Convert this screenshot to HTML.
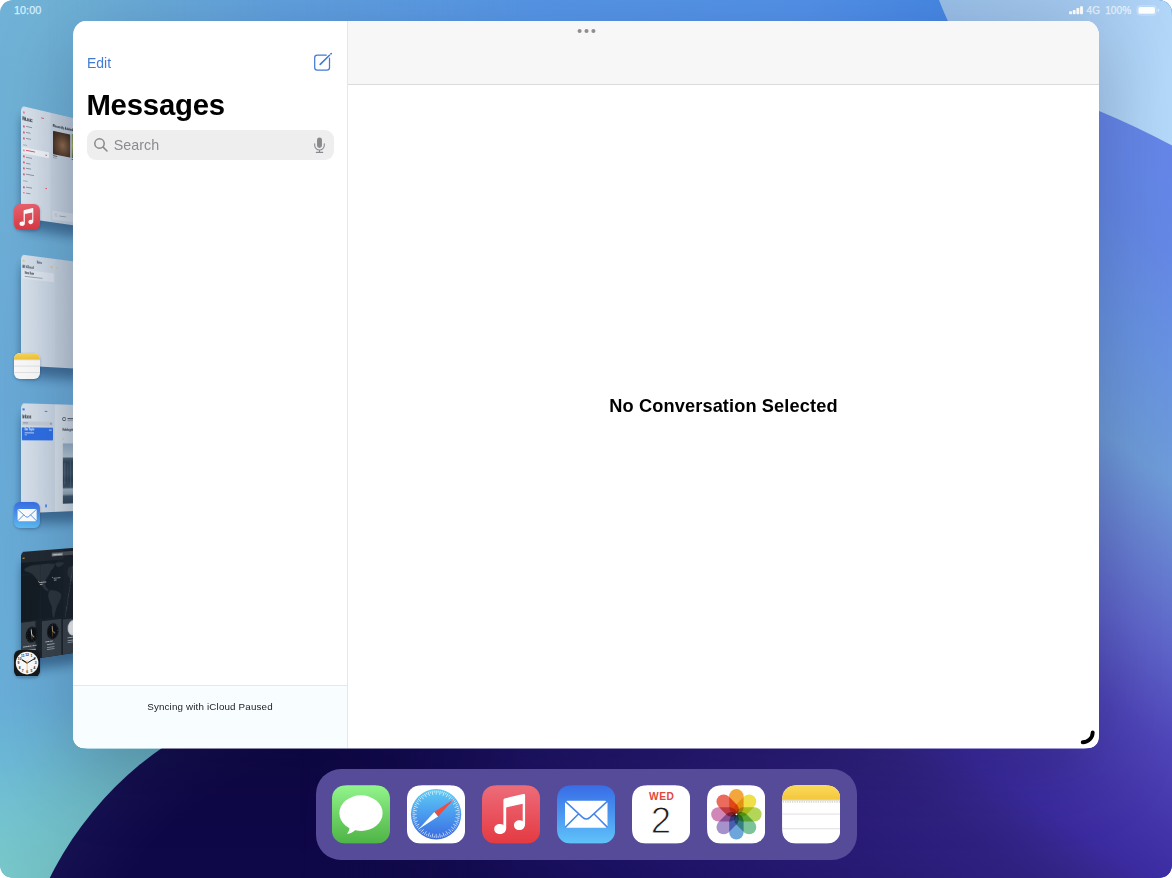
<!DOCTYPE html>
<html lang="en">
<head>
<meta charset="utf-8">
<title>Messages</title>
<style>
*{box-sizing:border-box;margin:0;padding:0}
html,body{width:1172px;height:878px;overflow:hidden;background:#fff;font-family:"Liberation Sans",sans-serif;}
#screen{position:absolute;left:0;top:0;width:1172px;height:878px;overflow:hidden;background:#6aaad2;clip-path:path("M0.00 20.18C0.00 14.37 0.00 11.46 0.99 8.34C2.23 4.92 4.92 2.23 8.34 0.99C11.46 0.00 14.37 0.00 20.18 0.00L1151.82 0.00C1157.63 0.00 1160.54 0.00 1163.66 0.99C1167.08 2.23 1169.77 4.92 1171.01 8.34C1172.00 11.46 1172.00 14.37 1172.00 20.18L1172.00 857.82C1172.00 863.63 1172.00 866.54 1171.01 869.66C1169.77 873.08 1167.08 875.77 1163.66 877.01C1160.54 878.00 1157.63 878.00 1151.82 878.00L20.18 878.00C14.37 878.00 11.46 878.00 8.34 877.01C4.92 875.77 2.23 873.08 0.99 869.66C0.00 866.54 0.00 863.63 0.00 857.82Z");}
#wall{position:absolute;left:0;top:0;width:1172px;height:878px;}
.abs{position:absolute}
/* status bar */
#time{position:absolute;left:14px;top:4.1px;font-size:10.9px;line-height:12px;color:#d6f0ff;letter-spacing:0;-webkit-text-stroke:0.25px #d6f0ff;}
#stat{position:absolute;left:1060px;top:0;width:112px;height:20px;}
/* window */
#win{position:absolute;left:73px;top:20.5px;width:1026px;height:728px;overflow:hidden;background:#fff;clip-path:path("M0.00 22.93C0.00 16.33 0.00 13.03 1.12 9.47C2.54 5.59 5.59 2.54 9.47 1.12C13.03 0.00 16.33 0.00 22.93 0.00L1003.07 0.00C1009.67 0.00 1012.97 0.00 1016.53 1.12C1020.41 2.54 1023.46 5.59 1024.88 9.47C1026.00 13.03 1026.00 16.33 1026.00 22.93L1026.00 709.66C1026.00 714.94 1026.00 717.58 1025.10 720.42C1023.97 723.53 1021.53 725.97 1018.42 727.10C1015.58 728.00 1012.94 728.00 1007.66 728.00L18.34 728.00C13.06 728.00 10.42 728.00 7.58 727.10C4.47 725.97 2.03 723.53 0.90 720.42C0.00 717.58 0.00 714.94 0.00 709.66Z");}
#win>*{margin-top:-0.5px}
#winsh{position:absolute;left:73px;top:20.5px;width:1026px;height:728px;border-radius:14px;box-shadow:0 20px 80px rgba(0,0,24,0.22);}
#side{position:absolute;left:0;top:0;width:274px;height:100%;background:#fff;}
#divider{position:absolute;left:274px;top:0;width:1px;height:100%;background:#e7e7e7;}
#main{position:absolute;left:275px;top:0;right:0;height:100%;background:#fff;}
#mainhead{position:absolute;left:0;top:0;right:0;height:65px;background:#f7f7f7;border-bottom:1px solid #dbdbdb;}
#edit{position:absolute;left:14px;top:33.8px;font-size:14px;line-height:18px;color:#437ad2;}
#title{position:absolute;left:13.4px;top:66.6px;font-size:29.3px;line-height:36px;font-weight:bold;color:#000;letter-spacing:-0.2px;}
#search{position:absolute;left:14px;top:109.6px;width:246.8px;height:30.3px;border-radius:9px;background:#eeeeef;}
#search span{position:absolute;left:26.8px;top:6.4px;font-size:14.3px;line-height:18px;color:#8a8a8f;}
#foot{position:absolute;left:0;top:665px;width:274px;bottom:0;background:#f8fdff;border-top:1px solid #e3e8ea;}
#foot span{position:absolute;left:0;width:274px;top:14.6px;text-align:center;font-size:9.8px;letter-spacing:0.16px;line-height:12px;color:#1c1c1e;}
#nocon{position:absolute;left:0;right:0;top:375.2px;text-align:center;font-size:18.2px;letter-spacing:0.12px;line-height:22px;font-weight:bold;color:#000;}
/* dock */
#dock{position:absolute;left:315.7px;top:769px;width:541px;height:91px;border-radius:25px;background:#564b99;}
.ic{position:absolute;top:16.2px;width:58.4px;height:58.5px;overflow:hidden;clip-path:path("M0.00 20.48C0.00 14.59 0.00 11.64 1.00 8.46C2.27 5.00 5.00 2.27 8.46 1.00C11.64 0.00 14.59 0.00 20.48 0.00L37.92 0.00C43.81 0.00 46.76 0.00 49.94 1.00C53.40 2.27 56.13 5.00 57.40 8.46C58.40 11.64 58.40 14.59 58.40 20.48L58.40 38.02C58.40 43.91 58.40 46.86 57.40 50.04C56.13 53.50 53.40 56.23 49.94 57.50C46.76 58.50 43.81 58.50 37.92 58.50L20.48 58.50C14.59 58.50 11.64 58.50 8.46 57.50C5.00 56.23 2.27 53.50 1.00 50.04C0.00 46.86 0.00 43.91 0.00 38.02Z");}
.ic svg{display:block}

/* stage manager thumbs */
.th{position:absolute;left:0;top:0;width:82px;border-radius:5px 0 0 5px;transform-origin:0 0;overflow:hidden;font-family:"Liberation Sans",sans-serif;}
.th i{position:absolute;display:block;}
.th b{position:absolute;display:block;font-weight:bold;white-space:nowrap;line-height:1;}
.ths{position:absolute;left:0;top:11px;width:82px;transform-origin:0 0;background:rgba(20,50,90,0.5);filter:blur(6px);border-radius:6px;}
.sic{position:absolute;left:13.9px;width:26.2px;height:26.2px;border-radius:6px;overflow:hidden;box-shadow:0 1px 3px rgba(10,30,70,0.28);}
.sic svg{display:block}
#winshadow{position:absolute;left:58px;top:20px;width:15px;height:728px;background:linear-gradient(90deg,rgba(20,50,100,0),rgba(20,50,100,0.10));}
</style>
</head>
<body>
<div id="screen">
<svg id="wall" viewBox="0 0 1172 878">
<defs>
<linearGradient id="gLeft" gradientUnits="userSpaceOnUse" x1="0" y1="0" x2="0" y2="878">
<stop offset="0" stop-color="#70b2d6"/><stop offset="0.12" stop-color="#6fb1d6"/><stop offset="0.45" stop-color="#69a9d7"/><stop offset="0.8" stop-color="#68aed8"/><stop offset="0.87" stop-color="#6cb8d5"/><stop offset="0.95" stop-color="#76c8d1"/><stop offset="1" stop-color="#7dd0cf"/>
</linearGradient>
<linearGradient id="gLeftX" gradientUnits="userSpaceOnUse" x1="0" y1="0" x2="120" y2="0">
<stop offset="0" stop-color="#46789a" stop-opacity="0"/><stop offset="0.6" stop-color="#46789a" stop-opacity="0.2"/><stop offset="1" stop-color="#46789a" stop-opacity="0.2"/>
</linearGradient>
<linearGradient id="gTop" gradientUnits="userSpaceOnUse" x1="0" y1="0" x2="950" y2="0">
<stop offset="0.05" stop-color="#5f9fe0" stop-opacity="0"/><stop offset="0.3" stop-color="#5d9ce2" stop-opacity="0.8"/><stop offset="0.55" stop-color="#5797e8" stop-opacity="1"/><stop offset="0.85" stop-color="#5392ea"/><stop offset="1" stop-color="#4788e6"/>
</linearGradient>
<linearGradient id="gTopFade" gradientUnits="userSpaceOnUse" x1="0" y1="0" x2="0" y2="300">
<stop offset="0.1" stop-color="#fff" stop-opacity="1"/><stop offset="1" stop-color="#fff" stop-opacity="0"/>
</linearGradient>
<mask id="mTop"><rect x="0" y="0" width="1172" height="300" fill="url(#gTopFade)"/></mask>
<linearGradient id="gRight" gradientUnits="userSpaceOnUse" x1="1172" y1="100" x2="550.5" y2="1007.5">
<stop offset="0" stop-color="#6685ea"/><stop offset="0.113" stop-color="#6488e6"/><stop offset="0.20" stop-color="#6893e1"/><stop offset="0.285" stop-color="#6e9cd9"/><stop offset="0.35" stop-color="#6780d1"/><stop offset="0.415" stop-color="#5e64c9"/><stop offset="0.485" stop-color="#4f45b9"/><stop offset="0.55" stop-color="#4334a9"/><stop offset="0.595" stop-color="#3b2ba0"/><stop offset="0.625" stop-color="#34268b"/><stop offset="0.655" stop-color="#2f2180"/><stop offset="0.685" stop-color="#2c1e7c"/><stop offset="0.87" stop-color="#1a1060"/><stop offset="0.974" stop-color="#110a4b"/>
</linearGradient>
<linearGradient id="gRightX" gradientUnits="userSpaceOnUse" x1="1095" y1="0" x2="1172" y2="0">
<stop offset="0" stop-color="#142878" stop-opacity="0.2"/><stop offset="1" stop-color="#142878" stop-opacity="0"/>
</linearGradient>
<linearGradient id="gRightY" gradientUnits="userSpaceOnUse" x1="0" y1="500" x2="0" y2="760">
<stop offset="0" stop-color="#fff" stop-opacity="1"/><stop offset="1" stop-color="#fff" stop-opacity="0"/>
</linearGradient>
<mask id="mRight"><rect x="1000" y="0" width="172" height="878" fill="url(#gRightY)"/></mask>
<linearGradient id="gLight" gradientUnits="userSpaceOnUse" x1="940" y1="0" x2="1172" y2="60">
<stop offset="0" stop-color="#9ac0e9"/><stop offset="0.6" stop-color="#a5caf0"/><stop offset="1" stop-color="#b3d8f9"/>
</linearGradient>
<linearGradient id="gBotFade" gradientUnits="userSpaceOnUse" x1="300" y1="0" x2="520" y2="0"><stop offset="0" stop-color="#fff" stop-opacity="0"/><stop offset="1" stop-color="#fff" stop-opacity="1"/></linearGradient>
<mask id="mBot"><rect x="300" y="740" width="872" height="140" fill="url(#gBotFade)"/></mask>
<radialGradient id="gTeal" gradientUnits="userSpaceOnUse" cx="359" cy="1031" r="520">
<stop offset="0.66" stop-color="#68aeb6" stop-opacity="0.55"/><stop offset="0.84" stop-color="#6cb4bc" stop-opacity="0"/>
</radialGradient>
<clipPath id="cRight"><rect x="1000" y="0" width="172" height="878"/></clipPath>
</defs>
<rect x="0" y="0" width="1172" height="878" fill="url(#gLeft)"/>
<rect x="0" y="0" width="1172" height="300" fill="url(#gTop)" mask="url(#mTop)"/>
<circle cx="1498" cy="-218" r="600" fill="url(#gLight)"/>
<g clip-path="url(#cRight)">
<circle cx="793" cy="850" r="800" fill="url(#gRight)"/>
</g>
<circle cx="359" cy="1031" r="520" fill="url(#gTeal)"/>
<radialGradient id="gDark" gradientUnits="userSpaceOnUse" cx="359" cy="1031" r="345"><stop offset="0.8" stop-color="#0f0848"/><stop offset="1" stop-color="#151050"/></radialGradient>
<circle cx="359" cy="1031" r="345" fill="url(#gDark)"/>
<rect x="300" y="740" width="872" height="140" fill="url(#gRight)" mask="url(#mBot)"/>
</svg>

<div id="time">10:00</div>
<svg id="stat" viewBox="0 0 112 20">
<g fill="#fff">
<rect x="9.1" y="11.3" width="2.9" height="3" rx="0.7"/>
<rect x="12.75" y="10" width="2.9" height="4.3" rx="0.7"/>
<rect x="16.4" y="8.1" width="2.9" height="6.2" rx="0.7"/>
<rect x="20.05" y="6.2" width="2.9" height="8.1" rx="0.7"/>
</g>
<g fill="#e6f0fb">
<text x="26.6" y="13.5" font-family="Liberation Sans, sans-serif" font-size="10.1" stroke="#e6f0fb" stroke-width="0.25">4G</text>
<text x="45.2" y="13.5" font-family="Liberation Sans, sans-serif" font-size="10.1" letter-spacing="0.05" stroke="#e6f0fb" stroke-width="0.25">100%</text>
</g>
<rect x="77.1" y="5.9" width="19" height="9.1" rx="2.7" fill="none" stroke="#fff" stroke-opacity="0.38" stroke-width="1"/>
<rect x="78.4" y="7.1" width="16.5" height="6.7" rx="1.6" fill="#fdfeff"/>
<rect x="97.8" y="8.7" width="1.3" height="3.2" rx="0.65" fill="#fff" fill-opacity="0.5"/>
</svg>


<!-- stage manager strip -->
<div class="ths" style="height:111.50px;transform:matrix3d(0.746115,0.233628,0,0.000594696,0,1,0,0,0,0,1,0,21,105.8,0,1)"></div>
<div class="th" style="height:111.50px;transform:matrix3d(0.746115,0.233628,0,0.000594696,0,1,0,0,0,0,1,0,21,105.8,0,1);background:linear-gradient(90deg,#dbe5ef 0,#d6e0eb 40.7px,#cfdae6 40.7px,#c2cedc 80px)"><i style="left:0px;top:0px;width:82px;height:120px;background:linear-gradient(90deg,rgba(92,124,152,0) 0,rgba(92,124,152,0.05) 30px,rgba(92,124,152,0.15) 74px)"></i>
<i style="left:2.59px;top:5.02px;width:2.19px;height:1.90px;border-radius:0.5px;border:0.4px solid rgba(229,83,106,0.75)"></i>
<i style="left:28.42px;top:7.21px;width:3.39px;height:0.71px;background:#e5536a;border-radius:0.4px"></i>
<b style="left:1.91px;top:10.37px;font-size:5.2px;color:#14181f;letter-spacing:-0.15px">Music</b>
<i style="left:2.59px;top:19.15px;width:2.19px;height:1.80px;border-radius:0.6px;background:#e5536a"></i><i style="left:7.26px;top:19.46px;width:7.60px;height:1.01px;background:#8c97a5"></i><i style="left:2.59px;top:24.97px;width:2.19px;height:1.80px;border-radius:0.6px;background:#e5536a"></i><i style="left:7.26px;top:25.31px;width:5.52px;height:1.01px;background:#8c97a5"></i><i style="left:2.59px;top:31.08px;width:2.19px;height:1.80px;border-radius:0.6px;background:#e5536a"></i><i style="left:7.26px;top:31.44px;width:6.90px;height:1.01px;background:#8c97a5"></i>
<i style="left:2.59px;top:37.79px;width:5.49px;height:0.90px;background:#a3adb9"></i>
<i style="left:1.64px;top:41.01px;width:37.13px;height:5.67px;border-radius:1px;background:#eef3f8"></i>
<i style="left:2.59px;top:42.80px;width:2.19px;height:1.80px;border-radius:0.8px;border:0.4px solid rgba(229,83,106,0.75)"></i><i style="left:7.26px;top:43.32px;width:11.91px;height:1.01px;background:#e5536a"></i>
<i style="left:2.59px;top:49.32px;width:2.19px;height:1.80px;border-radius:0.6px;background:#e5536a"></i><i style="left:7.26px;top:49.76px;width:7.60px;height:1.01px;background:#8c97a5"></i><i style="left:2.59px;top:55.23px;width:2.19px;height:1.80px;border-radius:0.6px;background:#e5536a"></i><i style="left:7.26px;top:55.69px;width:5.52px;height:1.01px;background:#8c97a5"></i><i style="left:2.59px;top:60.74px;width:2.19px;height:1.80px;border-radius:0.6px;background:#e5536a"></i><i style="left:7.26px;top:61.23px;width:6.90px;height:1.01px;background:#8c97a5"></i><i style="left:2.59px;top:66.86px;width:2.19px;height:1.80px;border-radius:0.6px;background:#e5536a"></i><i style="left:7.26px;top:67.40px;width:10.37px;height:1.01px;background:#8c97a5"></i>
<i style="left:2.59px;top:74.31px;width:6.04px;height:0.90px;background:#a3adb9"></i>
<i style="left:34.21px;top:43.87px;width:1.42px;height:0.82px;background:#e5536a"></i><i style="left:34.21px;top:78.17px;width:1.42px;height:0.82px;background:#e5536a"></i>
<i style="left:2.59px;top:79.79px;width:2.19px;height:1.80px;border-radius:0.6px;background:#e5536a"></i><i style="left:7.26px;top:80.36px;width:7.60px;height:1.01px;background:#8c97a5"></i><i style="left:2.59px;top:85.60px;width:2.19px;height:1.80px;border-radius:0.6px;background:#e5536a"></i><i style="left:7.26px;top:86.17px;width:5.52px;height:1.01px;background:#8c97a5"></i>
<b style="left:44.49px;top:11.45px;font-size:4.4px;color:#1b2028;letter-spacing:-0.25px">Recently Added</b>
<i style="left:44.64px;top:17.64px;width:25.36px;height:23.99px;border-radius:0.8px;background:radial-gradient(ellipse at 55% 55%,#8d6c50 0,#6b4f3a 35%,#4a3628 70%,#3a2b22 100%)"></i>
<i style="left:72.07px;top:17.37px;width:11.94px;height:24.28px;border-radius:0.8px;background:linear-gradient(#6d8a4a,#9aa860 50%,#4f6a3c)"></i>
<i style="left:44.64px;top:43.17px;width:6.63px;height:0.93px;background:#5c6672"></i><i style="left:44.64px;top:45.12px;width:4.90px;height:0.82px;background:#98a3af"></i>
<i style="left:72.07px;top:43.21px;width:5.95px;height:0.94px;background:#5c6672"></i>
<i style="left:44.21px;top:100.06px;width:44.17px;height:9.35px;border-radius:1.2px;background:rgba(255,255,255,0.22)"></i>
<i style="left:46.65px;top:101.73px;width:4.33px;height:4.12px;border-radius:0.6px;background:#c2ccd7"></i><i style="left:53.73px;top:103.73px;width:9.93px;height:0.93px;background:#98a3af"></i>
</div>
<div class="ths" style="height:110.60px;transform:matrix3d(0.738281,0.219194,0,0.000487373,0,1,0,0,0,0,1,0,21,254.4,0,1)"></div>
<div class="th" style="height:110.60px;transform:matrix3d(0.738281,0.219194,0,0.000487373,0,1,0,0,0,0,1,0,21,254.4,0,1);background:linear-gradient(90deg,#d9e3ee 0,#d0dbe8 47.8px,#cdd8e4 47.8px,#c4d0dd 80px)"><i style="left:0px;top:0px;width:82px;height:120px;background:linear-gradient(90deg,rgba(92,124,152,0) 0,rgba(92,124,152,0.05) 30px,rgba(92,124,152,0.15) 74px)"></i>
<i style="left:2.20px;top:5.15px;width:2.48px;height:1.80px;border-radius:0.5px;border:0.4px solid rgba(226,190,80,0.6)"></i>
<b style="left:21.65px;top:5.31px;font-size:2.8px;color:#3a4350;letter-spacing:-0.1px;font-weight:bold">Notes</b>
<i style="left:41.48px;top:7.88px;width:3.15px;height:2.25px;border-radius:1.1px;border:0.4px solid rgba(226,190,80,0.6)"></i>
<i style="left:49.52px;top:8.41px;width:2.02px;height:1.84px;border-radius:0.4px;border:0.4px solid rgba(226,190,80,0.6)"></i>
<b style="left:1.79px;top:11.38px;font-size:3.6px;color:#2b323c;letter-spacing:-0.1px">All iCloud</b>
<i style="left:1.79px;top:15.19px;width:44.42px;height:9.11px;border-radius:1px;background:rgba(255,255,255,0.28)"></i>
<b style="left:5.23px;top:16.96px;font-size:3px;color:#1c222b;letter-spacing:-0.1px">New Note</b>
<i style="left:5.23px;top:20.90px;width:25.15px;height:0.91px;background:#9aa5b2"></i>
</div>
<div class="ths" style="height:110.30px;transform:matrix3d(0.736464,0.206787,0,0.000462488,0,1,0,0,0,0,1,0,21,403.3,0,1)"></div>
<div class="th" style="height:110.30px;transform:matrix3d(0.736464,0.206787,0,0.000462488,0,1,0,0,0,0,1,0,21,403.3,0,1);background:linear-gradient(90deg,#d9e3ee 0,#d2dde9 48px,#e1e9f1 48px,#d3dde7 80px)"><i style="left:0px;top:0px;width:82px;height:120px;background:linear-gradient(90deg,rgba(92,124,152,0) 0,rgba(92,124,152,0.05) 30px,rgba(92,124,152,0.15) 74px)"></i>
<i style="left:2.20px;top:5.31px;width:2.76px;height:2.00px;border-radius:0.5px;border:0.4px solid #3d7be8"></i>
<i style="left:32.97px;top:6.85px;width:3.98px;height:0.81px;border-radius:0.4px;background:#3d7be8"></i>
<b style="left:1.93px;top:10.71px;font-size:5px;color:#14181f;letter-spacing:-0.2px">Inbox</b>
<i style="left:1.38px;top:17.62px;width:43.43px;height:3.94px;border-radius:1px;background:#c4cdd8"></i>
<i style="left:3.31px;top:19.07px;width:6.37px;height:0.80px;background:#8c96a3"></i><i style="left:41.23px;top:18.91px;width:1.29px;height:1.83px;border-radius:0.4px;background:#8c96a3"></i>
<i style="left:0.83px;top:24.08px;width:44.26px;height:12.83px;border-radius:1px;background:#2f6fe4"></i>
<b style="left:4.69px;top:24.76px;font-size:2.9px;color:#fff;letter-spacing:-0.1px">Dan Taylor</b>
<i style="left:4.69px;top:28.56px;width:13.35px;height:0.90px;background:#bcd2f8"></i><i style="left:4.69px;top:31.00px;width:3.04px;height:0.70px;background:#9fbef3"></i>
<i style="left:38.66px;top:26.24px;width:4.57px;height:0.71px;background:#bcd2f8"></i>
<i style="left:58.22px;top:13.34px;width:5.82px;height:4.11px;border-radius:2px;border:0.5px solid #59636f"></i>
<i style="left:66.08px;top:13.83px;width:10.28px;height:0.93px;background:#3c4550"></i><i style="left:66.08px;top:16.30px;width:8.80px;height:0.83px;background:#98a3af"></i>
<b style="left:58.51px;top:25.24px;font-size:3.2px;color:#1b2028;letter-spacing:-0.1px">Holiday photos</b>
<i style="left:58.80px;top:34.91px;width:1.16px;height:1.13px;background:#9aa5b2"></i>
<i style="left:59.09px;top:40.27px;width:23.48px;height:61.55px;background:linear-gradient(#8ea8be 0,#b0c2ce 22%,#4a6072 25%,#33485a 31%,#3b5163 50%,#2f4456 60%,#3d5467 73%,#a3b5c2 76%,#8da2b0 84%,#3d566a 88%,#34495c 100%)"></i>
<i style="left:61.41px;top:59.85px;width:1.60px;height:22.63px;background:rgba(200,215,225,0.14)"></i><i style="left:65.50px;top:62.03px;width:1.32px;height:18.55px;background:rgba(200,215,225,0.12)"></i><i style="left:69.59px;top:58.02px;width:1.76px;height:26.85px;background:rgba(200,215,225,0.14)"></i>
<i style="left:2.62px;top:102.03px;width:8.31px;height:0.70px;background:#aab4c0"></i>
<i style="left:34.10px;top:102.39px;width:2.27px;height:2.24px;border-radius:0.5px;border:0.4px solid #3d7be8"></i>
</div>
<div class="ths" style="height:109.30px;transform:matrix3d(0.740176,0.228604,0,0.000513334,0,1,0,0,0,0,1,0,21,551.9,0,1)"></div>
<div class="th" style="height:109.30px;transform:matrix3d(0.740176,0.228604,0,0.000513334,0,1,0,0,0,0,1,0,21,551.9,0,1);background:#1c242c">
<i style="left:0;top:0;width:60px;height:10.8px;background:#222a32"></i>
<i style="left:2.06px;top:5.67px;width:2.48px;height:1.00px;border-radius:0.5px;background:#f0a22e"></i>
<i style="left:42.88px;top:3.30px;width:37.94px;height:3.71px;border-radius:0.9px;background:#495159"></i>
<i style="left:43.45px;top:3.71px;width:15.30px;height:3.08px;border-radius:0.8px;background:#7f878e"></i>
<b style="left:45.17px;top:4.18px;font-size:2.2px;color:#fff">World Clock</b>
<i style="left:0;top:10.8px;width:60px;height:59.6px;background:linear-gradient(90deg,#131b23,#18212a)"></i>
<svg preserveAspectRatio="none" style="position:absolute;left:0.00px;top:11.07px;width:79.93px;height:61.23px" viewBox="0 0 56 60">
<path d="M3 6.5C7 3.5 13 2.6 19 3.4C24 2.4 29 3 33.6 4.2L31.4 8.6C29 10 28.4 13 26.6 15.4C25 17.6 23.6 19.4 23.6 22.4C23.4 25 25.4 27.4 27.4 29.8L25.8 30.6C23 28.6 21 26 19.6 23.4C17.6 21.4 16.4 18.6 14.4 16.2C12.4 13.6 10.6 11.2 7.6 10C5.6 9.2 3.6 8.4 3 6.5Z" fill="#2c353d"/>
<path d="M28 30.2C31 29.4 35 30.6 38.4 33.4C40.6 35.2 40 38 38.6 40.6C37 43.6 35.6 46 34.4 49.6C33.8 52.6 33 56 32 58.4C30.6 55.4 30.6 51.4 30.4 47.6C29.8 43.6 27 40 26.8 36C26.6 33.4 27 31.2 28 30.2Z" fill="#2c353d"/>
<path d="M33.4 3.4C36.4 2 40 2.2 42.6 3.6C41.6 6 38.6 7.6 35.6 7.2Z" fill="#2c353d"/>
<path d="M47 9C50 7 54 7.4 57 9V26H52C50 22 46.4 18 46 13.6Z" fill="#2c353d"/>
<path d="M52 6.4L43.8 59" stroke="#6a737b" stroke-width="0.5" stroke-dasharray="0.8 0.6" fill="none"/>
<path d="M0 12.6H16" stroke="#2a333b" stroke-width="0.4"/>
<path d="M19 0V60" stroke="#1f2830" stroke-width="0.4"/>
</svg>
<b style="left:24.99px;top:30.80px;font-size:2.2px;color:#fff">Cupertino</b><i style="left:23.59px;top:31.41px;width:1.12px;height:0.81px;background:#f0a22e"></i>
<b style="left:45.74px;top:27.82px;font-size:2.2px;color:#fff">New York</b><i style="left:44.31px;top:28.22px;width:1.15px;height:0.82px;background:#f0a22e"></i>
<i style="left:46.32px;top:30.69px;width:3.45px;height:0.61px;background:#9ba3ab"></i><i style="left:26.40px;top:33.86px;width:3.39px;height:0.61px;background:#9ba3ab"></i>
<i style="left:0;top:70.4px;width:60px;height:40px;background:#1a2229"></i>
<i style="left:0;top:70.8px;width:19.6px;height:40px;background:#39424a"></i>
<i style="left:29.22px;top:72.37px;width:27.50px;height:40.88px;background:#39424a"></i>
<i style="left:59.04px;top:73.12px;width:28.34px;height:41.50px;background:#39424a"></i>
<svg preserveAspectRatio="none" style="position:absolute;left:0.00px;top:72.30px;width:79.93px;height:38.78px" viewBox="0 0 56 38">
<g fill="#0d1116"><ellipse cx="10.4" cy="12" rx="5.8" ry="7.9"/><ellipse cx="31.2" cy="11.4" rx="5.8" ry="7.9"/></g>
<ellipse cx="52.2" cy="10.6" rx="5.8" ry="7.9" fill="#e9edf0"/>
<g stroke="#cfd5da" stroke-width="0.35" fill="none" stroke-dasharray="0.35 1.9"><ellipse cx="10.4" cy="12" rx="4.9" ry="6.8"/><ellipse cx="31.2" cy="11.4" rx="4.9" ry="6.8"/></g>
<ellipse cx="52.2" cy="10.6" rx="4.9" ry="6.8" stroke="#39424a" stroke-width="0.35" fill="none" stroke-dasharray="0.35 1.9"/>
<g stroke="#fff" stroke-width="0.6" stroke-linecap="round" fill="none"><path d="M10.4 12L9.8 6.6M10.4 12L12.6 14.6"/><path d="M31.2 11.4L30.6 6M31.2 11.4L33.6 13.6"/></g>
<g stroke="#20272e" stroke-width="0.6" stroke-linecap="round" fill="none"><path d="M52.2 10.6V5M52.2 10.6L54.8 10.8"/></g>
<g stroke="#f0a22e" stroke-width="0.3" fill="none"><path d="M10.2 8L10.6 17M31 7.4L31.4 16.4"/></g>
</svg>
<b style="left:2.75px;top:94.60px;font-size:2.5px;color:#fff;letter-spacing:-0.05px">Cupertino, 10:00</b>
<i style="left:8.26px;top:98.66px;width:12.52px;height:0.71px;background:#9ba3ab"></i>
<b style="left:34.04px;top:92.50px;font-size:2.5px;color:#fff;letter-spacing:-0.05px">New York</b>
<i style="left:35.74px;top:96.44px;width:11.44px;height:0.71px;background:#9ba3ab"></i><i style="left:35.74px;top:98.68px;width:11.44px;height:0.71px;background:#8a939b"></i><i style="left:35.74px;top:100.93px;width:11.44px;height:0.71px;background:#8a939b"></i>
<b style="left:65.76px;top:91.55px;font-size:2.5px;color:#fff;letter-spacing:-0.05px">London</b>
<i style="left:66.05px;top:95.08px;width:11.79px;height:0.73px;background:#9ba3ab"></i><i style="left:66.05px;top:97.36px;width:11.79px;height:0.73px;background:#8a939b"></i>
</div>
<div class="sic" style="top:203.8px"><svg width="26.2" height="26.2" viewBox="0 0 58.4 58.4"><defs><linearGradient id="gMus2" x1="0" y1="0" x2="0" y2="1"><stop offset="0" stop-color="#ea6270"/><stop offset="1" stop-color="#dc3a44"/></linearGradient></defs><rect width="58.4" height="58.4" fill="url(#gMus2)"/><path d="M21.4 15.6C21.4 14.2 22.1 13.5 23.4 13.2L41.4 9C42.5 8.8 43.1 9.3 43.1 10.4V38.6C43.1 42.6 40.6 45 37.2 45C34.2 45 32 43 32 40.2C32 37.2 34.4 35.2 37.6 35.2C38.8 35.2 39.8 35.4 40.7 35.9V18.8L24.2 22.4V43C24.2 46.8 21.6 49 18.2 49C14.8 49 12.2 47 12.2 44C12.2 41 14.8 39 18 39C19.3 39 20.5 39.3 21.4 39.9Z" fill="#fff"/></svg></div>
<div class="sic" style="top:352.5px"><svg width="26.2" height="26.2" viewBox="0 0 58.4 58.4"><defs><linearGradient id="gNote2" x1="0" y1="0" x2="0" y2="1"><stop offset="0" stop-color="#f8d95a"/><stop offset="1" stop-color="#f2c43c"/></linearGradient></defs><rect width="58.4" height="58.4" fill="#fbfbfb"/><rect width="58.4" height="14.8" fill="url(#gNote2)"/><rect y="14.8" width="58.4" height="1.2" fill="#d9d2b8"/><rect y="28.4" width="58.4" height="1.4" fill="#d6d6da"/><rect y="43.1" width="58.4" height="1.4" fill="#d6d6da"/></svg></div>
<div class="sic" style="top:501.6px"><svg width="26.2" height="26.2" viewBox="0 0 58.4 58.4"><defs><linearGradient id="gMail2" x1="0" y1="0" x2="0" y2="1"><stop offset="0" stop-color="#3a6fe6"/><stop offset="0.5" stop-color="#4a96ee"/><stop offset="1" stop-color="#5fbdf4"/></linearGradient></defs><rect width="58.4" height="58.4" fill="url(#gMail2)"/><rect x="8" y="15.7" width="42.5" height="27.1" rx="2.6" fill="#fff"/><path d="M8.6 16.6L25.6 32.3Q29.3 35.6 33 32.3L50 16.6M8.6 41.8L21.2 29.2M50 41.8L37.4 29.2" stroke="#4585ea" stroke-width="1.9" fill="none" stroke-linecap="round"/></svg></div>
<div class="sic" style="top:650.4px"><svg width="26.2" height="26.2" viewBox="0 0 58.4 58.4"><rect width="58.4" height="58.4" fill="#17181a"/><circle cx="29.2" cy="29.2" r="25.2" fill="#fdfdfd"/><text x="29.2" y="12.6" text-anchor="middle" font-family="Liberation Sans, sans-serif" font-weight="bold" font-size="7.4" fill="#1c1c1e">12</text><text x="38.8" y="15.2" text-anchor="middle" font-family="Liberation Sans, sans-serif" font-weight="bold" font-size="7.4" fill="#1c1c1e">1</text><text x="45.8" y="22.2" text-anchor="middle" font-family="Liberation Sans, sans-serif" font-weight="bold" font-size="7.4" fill="#1c1c1e">2</text><text x="48.4" y="31.8" text-anchor="middle" font-family="Liberation Sans, sans-serif" font-weight="bold" font-size="7.4" fill="#1c1c1e">3</text><text x="45.8" y="41.4" text-anchor="middle" font-family="Liberation Sans, sans-serif" font-weight="bold" font-size="7.4" fill="#1c1c1e">4</text><text x="38.8" y="48.4" text-anchor="middle" font-family="Liberation Sans, sans-serif" font-weight="bold" font-size="7.4" fill="#1c1c1e">5</text><text x="29.2" y="51.0" text-anchor="middle" font-family="Liberation Sans, sans-serif" font-weight="bold" font-size="7.4" fill="#1c1c1e">6</text><text x="19.6" y="48.4" text-anchor="middle" font-family="Liberation Sans, sans-serif" font-weight="bold" font-size="7.4" fill="#1c1c1e">7</text><text x="12.6" y="41.4" text-anchor="middle" font-family="Liberation Sans, sans-serif" font-weight="bold" font-size="7.4" fill="#1c1c1e">8</text><text x="10.0" y="31.8" text-anchor="middle" font-family="Liberation Sans, sans-serif" font-weight="bold" font-size="7.4" fill="#1c1c1e">9</text><text x="12.6" y="22.2" text-anchor="middle" font-family="Liberation Sans, sans-serif" font-weight="bold" font-size="7.4" fill="#1c1c1e">10</text><text x="19.6" y="15.2" text-anchor="middle" font-family="Liberation Sans, sans-serif" font-weight="bold" font-size="7.4" fill="#1c1c1e">11</text><path d="M29.2 29.2L18.6 22.4" stroke="#111" stroke-width="2.6" stroke-linecap="round"/><path d="M29.2 29.2L47.6 18.2" stroke="#111" stroke-width="2.2" stroke-linecap="round"/><path d="M29.2 23V52" stroke="#f0a030" stroke-width="1.2"/><circle cx="29.2" cy="29.2" r="1.8" fill="#f0a030"/></svg></div>
<div id="winsh"></div>
<div id="win">
  <div id="side">
    <div id="edit">Edit</div>
    <svg class="abs" style="left:238px;top:30px" width="24" height="24" viewBox="0 0 24 24" fill="none" stroke="#437ad2" stroke-linecap="round" stroke-linejoin="round">
      <path d="M15.3 5.1H6.3A2.6 2.6 0 0 0 3.7 7.7V17.5A2.6 2.6 0 0 0 6.3 20.1H15.9A2.6 2.6 0 0 0 18.5 17.5V8.1" stroke-width="1.25"/>
      <path d="M9.2 14.4L18.5 5.3" stroke-width="1.6"/><path d="M19.9 3.9L20.3 3.5" stroke-width="1.6"/>
    </svg>
    <div id="title">Messages</div>
    <div id="search">
      <svg class="abs" style="left:5.7px;top:7.2px" width="16" height="16" viewBox="0 0 16 16" fill="none" stroke="#88888d" stroke-width="1.5" stroke-linecap="round"><circle cx="6.5" cy="6.5" r="4.7"/><path d="M10.1 10.1L14 14"/></svg>
      <span>Search</span>
      <svg class="abs" style="left:226px;top:6px" width="13" height="19" viewBox="0 0 13 19" fill="none" stroke="#88888d" stroke-width="1.1" stroke-linecap="round"><rect x="4.05" y="1.4" width="4.9" height="10.5" rx="2.45" fill="#88888d" stroke="none"/><path d="M1.7 7.7v1.5a4.8 4.8 0 0 0 9.6 0v-1.5M6.5 14.2v2M3.3 16.4h6.4"/></svg>
    </div>
    <div id="foot"><span>Syncing with iCloud Paused</span></div>
  </div>
  <div id="divider"></div>
  <div id="main">
    <div id="mainhead"></div>
    <svg class="abs" style="left:226.5px;top:6.9px" width="24" height="8" viewBox="0 0 24 8"><g fill="#8e8e90"><circle cx="4.6" cy="4" r="2.05"/><circle cx="11.5" cy="4" r="2.05"/><circle cx="18.4" cy="4" r="2.05"/></g></svg>
    <div id="nocon">No Conversation Selected</div>
    <svg class="abs" style="left:728px;top:705px" width="24" height="24" viewBox="0 0 24 24" fill="none" stroke="#000" stroke-width="3.9" stroke-linecap="round"><path d="M6.7 17.2A9.9 9.9 0 0 0 16.7 7.5"/></svg>
  </div>
</div>

<div id="dock">
<div class="ic" style="left:16.10px"><svg width="58.4" height="58.5" viewBox="0 0 58.4 58.4" preserveAspectRatio="none"><defs><linearGradient id="gMsg" x1="0" y1="0" x2="0" y2="1"><stop offset="0" stop-color="#93f68d"/><stop offset="0.5" stop-color="#6fd367"/><stop offset="1" stop-color="#4fb446"/></linearGradient></defs>
<rect width="58.4" height="58.4" fill="url(#gMsg)"/>
<ellipse cx="29" cy="28.1" rx="21.6" ry="17.8" fill="#fff"/>
<path d="M17.6 41.5C17.6 45 16.6 47 15 48.6C18.6 48.4 21.6 47 23.6 44.6Z" fill="#fff"/></svg></div>
<div class="ic" style="left:91.15px"><svg width="58.4" height="58.5" viewBox="0 0 58.4 58.4" preserveAspectRatio="none"><defs><linearGradient id="gSaf" x1="0" y1="0" x2="0" y2="1"><stop offset="0" stop-color="#5fcbf4"/><stop offset="0.5" stop-color="#4a9cee"/><stop offset="1" stop-color="#3a6be0"/></linearGradient></defs>
<rect width="58.4" height="58.4" fill="#fff"/>
<circle cx="29.1" cy="29.2" r="25.15" fill="url(#gSaf)"/>
<path d="M29.20 9.60L29.20 5.50M31.08 7.68L31.27 5.59M32.60 9.90L33.32 5.86M34.79 8.34L35.33 6.31M35.90 10.78L37.31 6.93M38.33 9.62L39.22 7.72M39.00 12.23L41.05 8.68M41.59 11.51L42.79 9.79M41.80 14.19L44.43 11.04M44.47 13.93L45.96 12.44M44.21 16.60L47.36 13.97M46.89 16.81L48.61 15.61M46.17 19.40L49.72 17.35M48.78 20.07L50.68 19.18M47.62 22.50L51.47 21.09M50.06 23.61L52.09 23.07M48.50 25.80L52.54 25.08M50.72 27.32L52.81 27.13M48.80 29.20L52.90 29.20M50.72 31.08L52.81 31.27M48.50 32.60L52.54 33.32M50.06 34.79L52.09 35.33M47.62 35.90L51.47 37.31M48.78 38.33L50.68 39.22M46.17 39.00L49.72 41.05M46.89 41.59L48.61 42.79M44.21 41.80L47.36 44.43M44.47 44.47L45.96 45.96M41.80 44.21L44.43 47.36M41.59 46.89L42.79 48.61M39.00 46.17L41.05 49.72M38.33 48.78L39.22 50.68M35.90 47.62L37.31 51.47M34.79 50.06L35.33 52.09M32.60 48.50L33.32 52.54M31.08 50.72L31.27 52.81M29.20 48.80L29.20 52.90M27.32 50.72L27.13 52.81M25.80 48.50L25.08 52.54M23.61 50.06L23.07 52.09M22.50 47.62L21.09 51.47M20.07 48.78L19.18 50.68M19.40 46.17L17.35 49.72M16.81 46.89L15.61 48.61M16.60 44.21L13.97 47.36M13.93 44.47L12.44 45.96M14.19 41.80L11.04 44.43M11.51 41.59L9.79 42.79M12.23 39.00L8.68 41.05M9.62 38.33L7.72 39.22M10.78 35.90L6.93 37.31M8.34 34.79L6.31 35.33M9.90 32.60L5.86 33.32M7.68 31.08L5.59 31.27M9.60 29.20L5.50 29.20M7.68 27.32L5.59 27.13M9.90 25.80L5.86 25.08M8.34 23.61L6.31 23.07M10.78 22.50L6.93 21.09M9.62 20.07L7.72 19.18M12.23 19.40L8.68 17.35M11.51 16.81L9.79 15.61M14.19 16.60L11.04 13.97M13.93 13.93L12.44 12.44M16.60 14.19L13.97 11.04M16.81 11.51L15.61 9.79M19.40 12.23L17.35 8.68M20.07 9.62L19.18 7.72M22.50 10.78L21.09 6.93M23.61 8.34L23.07 6.31M25.80 9.90L25.08 5.86M27.32 7.68L27.13 5.59" stroke="#fff" stroke-opacity="0.85" stroke-width="0.8" fill="none"/>
<path d="M46.77 14.35L31.07 31.42L27.33 26.98Z" fill="#ef4b3f"/><path d="M11.63 44.05L31.07 31.42L27.33 26.98Z" fill="#fff"/></svg></div>
<div class="ic" style="left:166.20px"><svg width="58.4" height="58.5" viewBox="0 0 58.4 58.4" preserveAspectRatio="none"><defs><linearGradient id="gMus" x1="0" y1="0" x2="0" y2="1"><stop offset="0" stop-color="#ed6c7a"/><stop offset="1" stop-color="#e43a42"/></linearGradient></defs>
<rect width="58.4" height="58.4" fill="url(#gMus)"/>
<path d="M21.4 15.6C21.4 14.2 22.1 13.5 23.4 13.2L41.4 9C42.5 8.8 43.1 9.3 43.1 10.4V38.6C43.1 42.6 40.6 45 37.2 45C34.2 45 32 43 32 40.2C32 37.2 34.4 35.2 37.6 35.2C38.8 35.2 39.8 35.4 40.7 35.9V18.8L24.2 22.4V43C24.2 46.8 21.6 49 18.2 49C14.8 49 12.2 47 12.2 44C12.2 41 14.8 39 18 39C19.3 39 20.5 39.3 21.4 39.9Z" fill="#fff"/></svg></div>
<div class="ic" style="left:241.25px"><svg width="58.4" height="58.5" viewBox="0 0 58.4 58.4" preserveAspectRatio="none"><defs><linearGradient id="gMail" x1="0" y1="0" x2="0" y2="1"><stop offset="0" stop-color="#386ce6"/><stop offset="0.5" stop-color="#4a96f0"/><stop offset="1" stop-color="#60c3f8"/></linearGradient></defs>
<rect width="58.4" height="58.4" fill="url(#gMail)"/>
<rect x="8" y="15.7" width="42.5" height="27.1" rx="2.6" fill="#fff"/>
<path d="M8.6 16.6L25.6 32.3Q29.3 35.6 33 32.3L50 16.6M8.6 41.8L21.2 29.2M50 41.8L37.4 29.2" stroke="#4585ea" stroke-width="1.5" fill="none" stroke-linecap="round"/></svg></div>
<div class="ic" style="left:316.30px"><svg width="58.4" height="58.5" viewBox="0 0 58.4 58.4" preserveAspectRatio="none"><rect width="58.4" height="58.4" fill="#fff"/>
<text x="29.7" y="14.8" text-anchor="middle" font-family="Liberation Sans, sans-serif" font-weight="bold" font-size="10.2" letter-spacing="0.5" fill="#e0493e">WED</text>
<text x="29" y="48.2" text-anchor="middle" font-family="Liberation Sans, sans-serif" font-size="36.6" fill="#1c1c1e" stroke="#fff" stroke-width="0.9" style="paint-order:fill stroke">2</text></svg></div>
<div class="ic" style="left:391.35px"><svg width="58.4" height="58.5" viewBox="0 0 58.4 58.4" preserveAspectRatio="none"><rect width="58.4" height="58.4" fill="#fff"/>
<g transform="translate(29.4 29.3)" style="mix-blend-mode:multiply;isolation:isolate"><g style="mix-blend-mode:multiply"><rect style="mix-blend-mode:multiply" x="-7.2" y="-25.2" width="14.4" height="25.6" rx="7.2" fill="#f3a63b" transform="rotate(0)"/><rect style="mix-blend-mode:multiply" x="-7.2" y="-25.2" width="14.4" height="25.6" rx="7.2" fill="#efe04a" transform="rotate(45)"/><rect style="mix-blend-mode:multiply" x="-7.2" y="-25.2" width="14.4" height="25.6" rx="7.2" fill="#b3d558" transform="rotate(90)"/><rect style="mix-blend-mode:multiply" x="-7.2" y="-25.2" width="14.4" height="25.6" rx="7.2" fill="#7cc39a" transform="rotate(135)"/><rect style="mix-blend-mode:multiply" x="-7.2" y="-25.2" width="14.4" height="25.6" rx="7.2" fill="#6ea6dc" transform="rotate(180)"/><rect style="mix-blend-mode:multiply" x="-7.2" y="-25.2" width="14.4" height="25.6" rx="7.2" fill="#a592cc" transform="rotate(225)"/><rect style="mix-blend-mode:multiply" x="-7.2" y="-25.2" width="14.4" height="25.6" rx="7.2" fill="#d188b8" transform="rotate(270)"/><rect style="mix-blend-mode:multiply" x="-7.2" y="-25.2" width="14.4" height="25.6" rx="7.2" fill="#eb6c5c" transform="rotate(315)"/></g></g>
<circle cx="29.4" cy="29.3" r="0.9" fill="#fff"/></svg></div>
<div class="ic" style="left:466.40px"><svg width="58.4" height="58.5" viewBox="0 0 58.4 58.4" preserveAspectRatio="none"><defs><linearGradient id="gNote" x1="0" y1="0" x2="0" y2="1"><stop offset="0" stop-color="#fadb5c"/><stop offset="1" stop-color="#f4c63c"/></linearGradient></defs>
<rect width="58.4" height="58.4" fill="#fff"/>
<rect width="58.4" height="14.8" fill="url(#gNote)"/>
<rect y="14.8" width="58.4" height="0.7" fill="#cfc7a8"/>
<rect x="1.20" y="16.3" width="0.8" height="1.2" fill="#b9b9bd"/><rect x="2.95" y="16.3" width="0.8" height="1.2" fill="#b9b9bd"/><rect x="4.70" y="16.3" width="0.8" height="1.2" fill="#b9b9bd"/><rect x="6.45" y="16.3" width="0.8" height="1.2" fill="#b9b9bd"/><rect x="8.20" y="16.3" width="0.8" height="1.2" fill="#b9b9bd"/><rect x="9.95" y="16.3" width="0.8" height="1.2" fill="#b9b9bd"/><rect x="11.70" y="16.3" width="0.8" height="1.2" fill="#b9b9bd"/><rect x="13.45" y="16.3" width="0.8" height="1.2" fill="#b9b9bd"/><rect x="15.20" y="16.3" width="0.8" height="1.2" fill="#b9b9bd"/><rect x="16.95" y="16.3" width="0.8" height="1.2" fill="#b9b9bd"/><rect x="18.70" y="16.3" width="0.8" height="1.2" fill="#b9b9bd"/><rect x="20.45" y="16.3" width="0.8" height="1.2" fill="#b9b9bd"/><rect x="22.20" y="16.3" width="0.8" height="1.2" fill="#b9b9bd"/><rect x="23.95" y="16.3" width="0.8" height="1.2" fill="#b9b9bd"/><rect x="25.70" y="16.3" width="0.8" height="1.2" fill="#b9b9bd"/><rect x="27.45" y="16.3" width="0.8" height="1.2" fill="#b9b9bd"/><rect x="29.20" y="16.3" width="0.8" height="1.2" fill="#b9b9bd"/><rect x="30.95" y="16.3" width="0.8" height="1.2" fill="#b9b9bd"/><rect x="32.70" y="16.3" width="0.8" height="1.2" fill="#b9b9bd"/><rect x="34.45" y="16.3" width="0.8" height="1.2" fill="#b9b9bd"/><rect x="36.20" y="16.3" width="0.8" height="1.2" fill="#b9b9bd"/><rect x="37.95" y="16.3" width="0.8" height="1.2" fill="#b9b9bd"/><rect x="39.70" y="16.3" width="0.8" height="1.2" fill="#b9b9bd"/><rect x="41.45" y="16.3" width="0.8" height="1.2" fill="#b9b9bd"/><rect x="43.20" y="16.3" width="0.8" height="1.2" fill="#b9b9bd"/><rect x="44.95" y="16.3" width="0.8" height="1.2" fill="#b9b9bd"/><rect x="46.70" y="16.3" width="0.8" height="1.2" fill="#b9b9bd"/><rect x="48.45" y="16.3" width="0.8" height="1.2" fill="#b9b9bd"/><rect x="50.20" y="16.3" width="0.8" height="1.2" fill="#b9b9bd"/><rect x="51.95" y="16.3" width="0.8" height="1.2" fill="#b9b9bd"/><rect x="53.70" y="16.3" width="0.8" height="1.2" fill="#b9b9bd"/><rect x="55.45" y="16.3" width="0.8" height="1.2" fill="#b9b9bd"/><rect x="57.20" y="16.3" width="0.8" height="1.2" fill="#b9b9bd"/>
<rect y="28.6" width="58.4" height="0.8" fill="#d8d8dc"/>
<rect y="43.3" width="58.4" height="0.8" fill="#d8d8dc"/></svg></div>
</div>
</div>
</body>
</html>
